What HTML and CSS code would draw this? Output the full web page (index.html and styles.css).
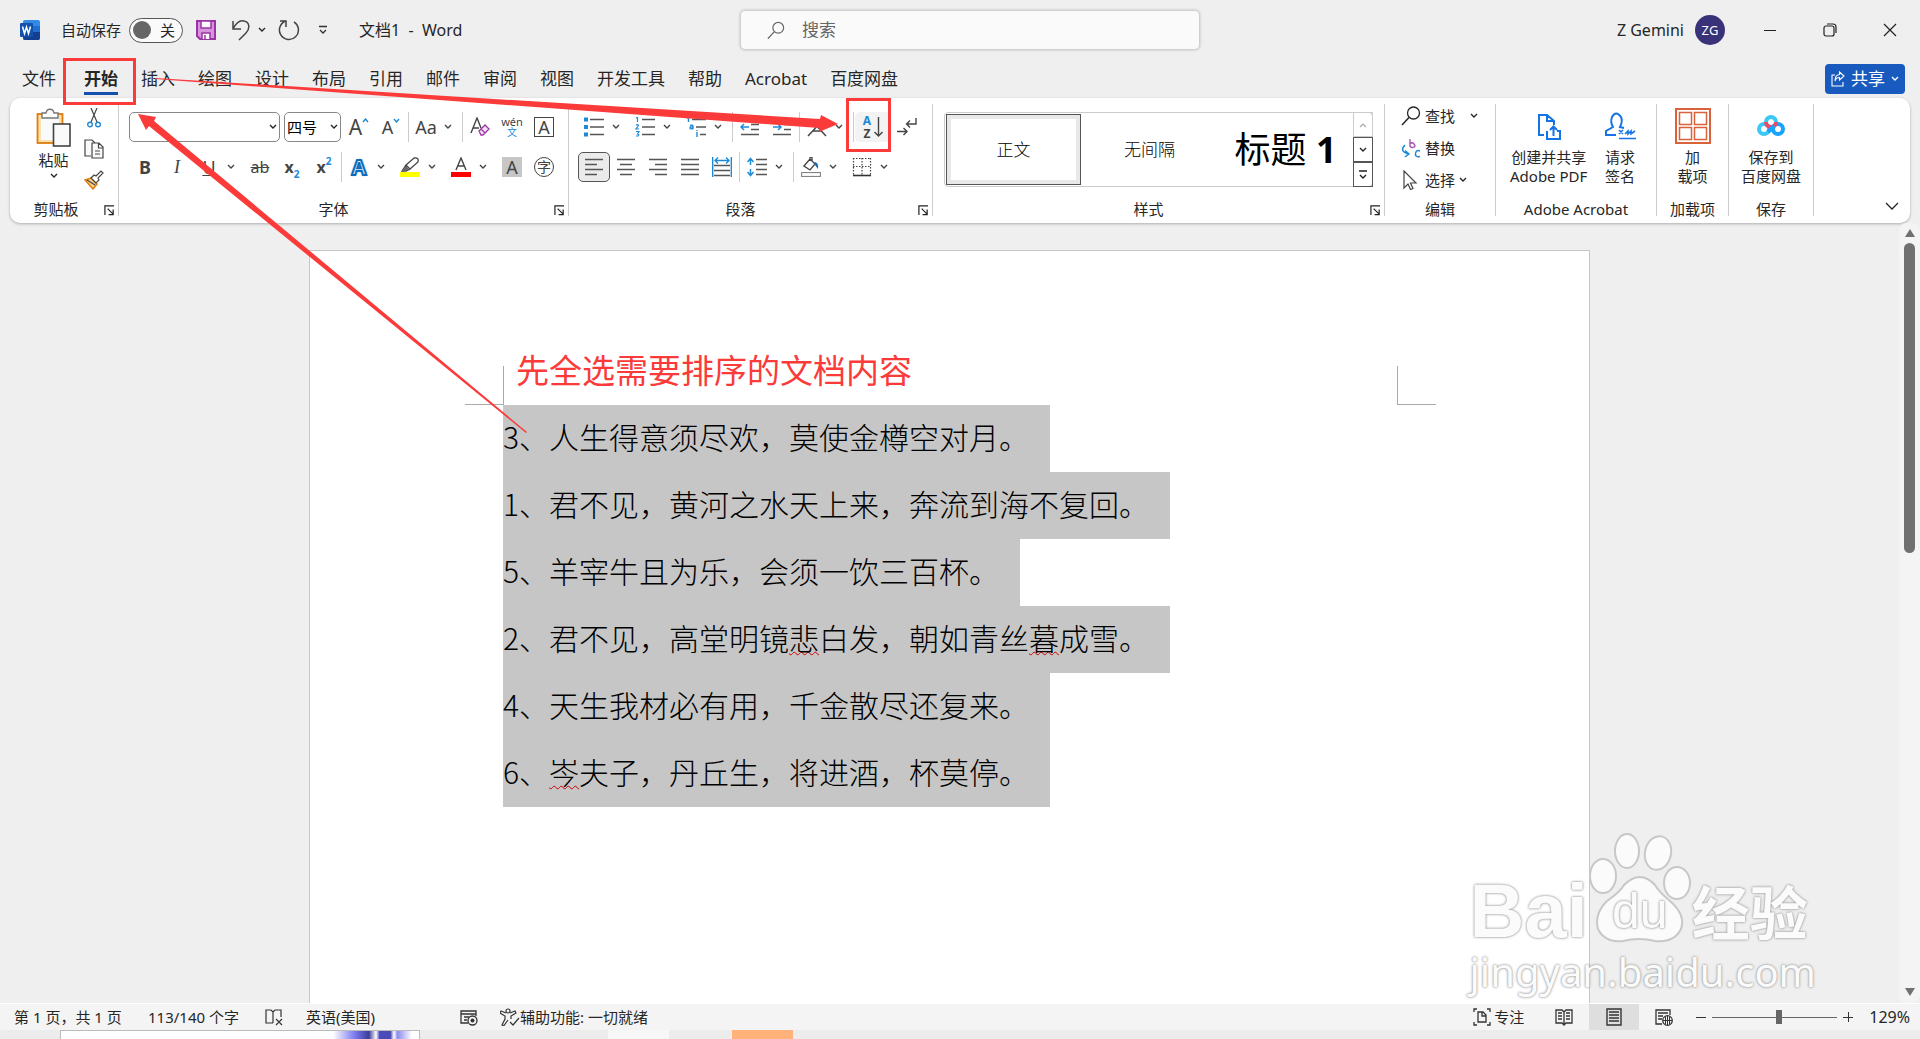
FILE: index.html
```
<!DOCTYPE html>
<html lang="zh-CN">
<head>
  <meta charset="UTF-8">
  <title>文档1 - Word</title>
  <link rel="stylesheet" href="styles.css">
</head>
<body>

  <svg class="defs" aria-hidden="true">
    <symbol id="chev" viewBox="0 0 8 6"><path d="M1 1l3 3 3-3" fill="none" stroke="currentColor" stroke-width="1.4"/></symbol>
    <symbol id="launch" viewBox="0 0 12 12"><path d="M1 11V1h10M4 4l6 6M10 5v5.500H5" fill="none" stroke="#222" stroke-width="1.300"/></symbol>
    <symbol id="lens" viewBox="0 0 20 20"><circle cx="12.500" cy="7" r="6" fill="none" stroke="currentColor" stroke-width="1.300"/><path d="M8 11.500L1 19" stroke="currentColor" stroke-width="1.500"/></symbol>
  </svg>

  <header class="titlebar">
    <div class="quick">
      <svg class="word-logo" width="20" height="20" viewBox="0 0 20 20">
        <rect x="3" width="17" height="20" rx="2" fill="#2f8be6"/>
        <path d="M3 10h17v8a2 2 0 0 1-2 2H5a2 2 0 0 1-2-2z" fill="#123f8f"/>
        <rect x="3" y="6" width="17" height="6" fill="#1f6fd0"/>
        <rect y="3" width="13" height="14" rx="1" fill="#1450ae"/>
        <path d="M2.500 6.500l2 7 2-6.500 2 6.500 2-7" fill="none" stroke="#fff" stroke-width="1.500"/>
      </svg>
      <label class="autosave">自动保存
        <span class="switch"><input type="checkbox"><span>关</span></span>
      </label>
      <button class="qbtn" title="保存">
        <svg width="20" height="20" viewBox="0 0 20 20"><path d="M1 1h18v18H4l-3-3z" fill="#d793dc" stroke="#9b34a5" stroke-width="2"/><path d="M5 1h10v7H5zM6 19v-6h8v6" fill="#fafafa" stroke="#9b34a5" stroke-width="1.500"/><path d="M9 15v4" stroke="#9b34a5" stroke-width="1.500"/></svg>
      </button>
      <button class="qbtn undo" title="撤消">
        <svg width="20" height="22" viewBox="0 0 20 22"><path d="M2 2v8h8M2 10C5 4 9 1 13 2c6 1 6 8 2 12l-7 7" fill="none" stroke="#444" stroke-width="1.500"/></svg>
        <svg width="8" height="6"><use href="#chev"/></svg>
      </button>
      <button class="qbtn" title="恢复">
        <svg width="22" height="22" viewBox="0 0 22 22"><path d="M2 2h6v6M8 2a9.500 9.500 0 1 0 8 1" fill="none" stroke="#444" stroke-width="1.500"/></svg>
      </button>
      <button class="qbtn" title="自定义快速访问工具栏">
        <svg width="10" height="10" viewBox="0 0 10 10"><path d="M1 1.500h8M2 5l3 3 3-3" fill="none" stroke="#333" stroke-width="1.300"/></svg>
      </button>
      <span class="doc-name">文档1&nbsp; -&nbsp; Word</span>
    </div>
    <label class="search">
      <svg width="18" height="19"><use href="#lens"/></svg>
      <input type="text" placeholder="搜索">
    </label>
    <div class="account">
      <span>Z Gemini</span>
      <span class="avatar">ZG</span>
      <button class="win" title="最小化"><svg width="14" height="14"><path d="M1 7.500h12" stroke="#222"/></svg></button>
      <button class="win" title="还原"><svg width="14" height="14" viewBox="0 0 14 14"><rect x="1" y="3" width="10" height="10" rx="2" fill="none" stroke="#222" stroke-width="1.200"/><path d="M4 1h6q3 0 3 3v6" fill="none" stroke="#222" stroke-width="1.200"/></svg></button>
      <button class="win" title="关闭"><svg width="14" height="14"><path d="M1 1l12 12M13 1L1 13" stroke="#222" stroke-width="1.200"/></svg></button>
    </div>
  </header>

  <nav class="tabs">
    <a href="#" class="file">文件</a>
    <a href="#" class="active">开始</a>
    <a href="#">插入</a>
    <a href="#">绘图</a>
    <a href="#">设计</a>
    <a href="#">布局</a>
    <a href="#">引用</a>
    <a href="#">邮件</a>
    <a href="#">审阅</a>
    <a href="#">视图</a>
    <a href="#">开发工具</a>
    <a href="#">帮助</a>
    <a href="#">Acrobat</a>
    <a href="#">百度网盘</a>
    <button class="share">
      <svg width="14" height="16" viewBox="0 0 14 16"><path d="M4 4H1v11h11v-4M8.500 1L13 5l-4.500 4V6.500Q5 6.500 4 10q0-6 4.500-6.500z" fill="none" stroke="#fff" stroke-width="1.100"/></svg>
      共享
      <svg width="8" height="6"><use href="#chev"/></svg>
    </button>
  </nav>

  <section class="ribbon">
    <div class="group clipboard">
      <div class="body">
        <button class="paste">
          <svg width="35" height="39" viewBox="0 0 35 39">
            <rect x="1.500" y="6" width="25" height="29" fill="#fbe2ad" stroke="#e07c10" stroke-width="1.800"/>
            <rect x="5" y="9" width="18" height="23" fill="#fafafa"/>
            <path d="M6 10V5h4c1-5 7-5 8 0h4v5z" fill="#fff" stroke="#777" stroke-width="1.400"/>
            <rect x="17.500" y="16" width="16.500" height="22" fill="#fafafa" stroke="#444" stroke-width="1.600"/>
          </svg>
          <span>粘贴</span>
          <svg width="8" height="6"><use href="#chev"/></svg>
        </button>
        <div class="stack">
          <button title="剪切"><svg width="14" height="20" viewBox="0 0 14 20"><path d="M4 0l6 14M10 0L4 14" stroke="#444" stroke-width="1.200"/><circle cx="3" cy="16.500" r="2.300" fill="none" stroke="#1e8ad6" stroke-width="1.400"/><circle cx="11" cy="16.500" r="2.300" fill="none" stroke="#1e8ad6" stroke-width="1.400"/></svg></button>
          <button title="复制"><svg width="20" height="20" viewBox="0 0 20 20"><path d="M7 17H1V1h7l3 3" fill="#fafafa" stroke="#444" stroke-width="1.200"/><path d="M8 4h7l4 4v11H8zM14.500 4v5H19M11 12h5M11 15h5" fill="#fafafa" stroke="#444" stroke-width="1.200"/></svg></button>
          <button title="格式刷"><svg width="20" height="20" viewBox="0 0 20 20"><path d="M1 10l6-2 6 6-4 5z" fill="#fbd28a" stroke="#e07c10" stroke-width="1.500"/><path d="M3 10l8 5M7 8l3-3 2 1 5-5 2 2-5 5 1 2-3 3z" fill="#fff" stroke="#444" stroke-width="1.200"/></svg></button>
        </div>
      </div>
      <div class="foot"><span>剪贴板</span><button title="剪贴板设置"><svg width="11" height="11"><use href="#launch"/></svg></button></div>
    </div>

    <div class="group font">
      <div class="body rows">
        <div class="row">
          <div class="combo name"><select aria-label="字体"><option></option></select><svg width="8" height="6"><use href="#chev"/></svg></div>
          <div class="combo size"><select aria-label="字号"><option>四号</option></select><svg width="8" height="6"><use href="#chev"/></svg></div>
          <button class="ib grow">A<svg width="7" height="5" viewBox="0 0 7 5"><path d="M1 4l2.500-3L6 4" fill="none" stroke="#1e8ad6" stroke-width="1.400"/></svg></button>
          <button class="ib shrink">A<svg width="7" height="5" viewBox="0 0 7 5"><path d="M1 1l2.500 3L6 1" fill="none" stroke="#1e8ad6" stroke-width="1.400"/></svg></button>
          <i class="sep"></i>
          <button class="ib split case"><b>Aa</b><svg width="8" height="6"><use href="#chev"/></svg></button>
          <i class="sep"></i>
          <button class="ib" title="清除格式"><svg width="20" height="20" viewBox="0 0 20 20"><path d="M1 16L7 1l4 10M3 11h6" fill="none" stroke="#444" stroke-width="1.400"/><path d="M9 14l6-6 4 4-6 6h-2zM11 12l4 4" fill="#f5e3f7" stroke="#9b34a5" stroke-width="1.300"/></svg></button>
          <button class="ib pinyin"><span>wén</span><span>文</span></button>
          <button class="ib"><span class="boxed">A</span></button>
        </div>
        <div class="row">
          <button class="ib bold">B</button>
          <button class="ib ital">I</button>
          <button class="ib split"><b class="under">U</b><svg width="8" height="6"><use href="#chev"/></svg></button>
          <button class="ib strike">ab</button>
          <button class="ib script">x<sub>2</sub></button>
          <button class="ib script">x<sup>2</sup></button>
          <i class="sep"></i>
          <button class="ib split"><b class="effect">A</b><svg width="8" height="6"><use href="#chev"/></svg></button>
          <button class="ib split"><b><svg width="20" height="20" viewBox="0 0 20 20"><path d="M2 14l4-6 4 4-4 2zM6 8l8-7q5-1 4 4l-8 7" fill="none" stroke="#444" stroke-width="1.300"/><path d="M2 14l4-5 3 3-3 2z" fill="#666"/><rect y="15" width="20" height="5" fill="#ff0"/></svg></b><svg width="8" height="6"><use href="#chev"/></svg></button>
          <button class="ib split"><b><svg width="20" height="20" viewBox="0 0 20 20"><path d="M5 13L10 1l5 12M7 9h6" fill="none" stroke="#444" stroke-width="1.400"/><rect y="15" width="20" height="5" fill="#f00"/></svg></b><svg width="8" height="6"><use href="#chev"/></svg></button>
          <button class="ib"><span class="shaded">A</span></button>
          <button class="ib"><span class="ringed">字</span></button>
        </div>
      </div>
      <div class="foot"><span>字体</span><button title="字体设置"><svg width="11" height="11"><use href="#launch"/></svg></button></div>
    </div>

    <div class="group para">
      <div class="body rows">
        <div class="row">
          <button class="ib split" title="项目符号"><b><svg width="20" height="20" viewBox="0 0 20 20"><path d="M0 2.500h4M0 10h4M0 17.500h4" stroke="#1e8ad6" stroke-width="4"/><path d="M6 2.500h14M6 10h14M6 17.500h14" stroke="#555" stroke-width="1.500"/></svg></b><svg width="8" height="6"><use href="#chev"/></svg></button>
          <button class="ib split" title="编号"><b><svg width="20" height="20" viewBox="0 0 20 20"><path d="M1 1l1.500-.5V5M1 8q2-1 2.500.5L1 12h3M1 14.500h3L2.500 17Q5 17.500 3 19H1" fill="none" stroke="#1e8ad6" stroke-width="1.200"/><path d="M7 2.500h13M7 10h13M7 17.500h13" stroke="#555" stroke-width="1.500"/></svg></b><svg width="8" height="6"><use href="#chev"/></svg></button>
          <button class="ib split" title="多级列表"><b><svg width="20" height="20" viewBox="0 0 20 20"><path d="M1 1l1.500-.5V5M4 8.500q3-1 3 1v2.500M7 10q-3-.5-3 1t3 .5M11 15v5M11 13v1" fill="none" stroke="#1e8ad6" stroke-width="1.400"/><path d="M6 2.500h14M10 10h10M14 17.500h6" stroke="#555" stroke-width="1.500"/></svg></b><svg width="8" height="6"><use href="#chev"/></svg></button>
          <i class="sep"></i>
          <button class="ib" title="减少缩进量"><svg width="20" height="20" viewBox="0 0 20 20"><path d="M1 2.500h18M11 7.500h8M11 12.500h8M1 17.500h18" stroke="#555" stroke-width="1.500"/><path d="M9 10H1M4 7l-3 3 3 3" fill="none" stroke="#1e8ad6" stroke-width="1.500"/></svg></button>
          <button class="ib" title="增加缩进量"><svg width="20" height="20" viewBox="0 0 20 20"><path d="M1 2.500h18M12 7.500h7M12 12.500h7M1 17.500h18" stroke="#555" stroke-width="1.500"/><path d="M1 10h8M6 7l3 3-3 3" fill="none" stroke="#1e8ad6" stroke-width="1.500"/></svg></button>
          <i class="sep"></i>
          <button class="ib split" title="中文版式"><b><svg width="20" height="20" viewBox="0 0 20 20"><path d="M1 19L16 3M19 19L4 3M6 14h8" fill="none" stroke="#444" stroke-width="1.500"/></svg></b><svg width="8" height="6"><use href="#chev"/></svg></button>
          <i class="sep"></i>
          <button class="ib sort" title="排序"><span class="az"><i>A</i><i>Z</i></span><svg width="9" height="20" viewBox="0 0 9 20"><path d="M4.500 0v19M.5 15l4 4 4-4" fill="none" stroke="#444" stroke-width="1.400"/></svg></button>
          <button class="ib" title="显示编辑标记"><svg width="20" height="20" viewBox="0 0 20 20"><path d="M19 1v6h-9M13 3.500L9.500 7l3.500 3.500M0 14.500h10M6.500 11l3.500 3.500L6.500 18" fill="none" stroke="#444" stroke-width="1.400"/></svg></button>
        </div>
        <div class="row">
          <button class="ib pressed" title="左对齐"><svg width="18" height="18" viewBox="0 0 18 18"><path d="M0 1.500h18M0 6.500h12M0 11.500h18M0 16.500h12" stroke="#555" stroke-width="1.500"/></svg></button>
          <button class="ib" title="居中"><svg width="18" height="18" viewBox="0 0 18 18"><path d="M0 1.500h18M3 6.500h12M0 11.500h18M3 16.500h12" stroke="#555" stroke-width="1.500"/></svg></button>
          <button class="ib" title="右对齐"><svg width="18" height="18" viewBox="0 0 18 18"><path d="M0 1.500h18M6 6.500h12M0 11.500h18M6 16.500h12" stroke="#555" stroke-width="1.500"/></svg></button>
          <button class="ib" title="两端对齐"><svg width="18" height="18" viewBox="0 0 18 18"><path d="M0 1.500h18M0 6.500h18M0 11.500h18M0 16.500h18" stroke="#555" stroke-width="1.500"/></svg></button>
          <button class="ib" title="分散对齐"><svg width="20" height="20" viewBox="0 0 20 20"><path d="M.7 0v20M19.300 0v20M3 3.500h14M6 .5l-3 3 3 3M14 .5l3 3-3 3" fill="none" stroke="#1e8ad6" stroke-width="1.400"/><path d="M2 8.500h16M2 13.500h16M2 18.500h16" stroke="#555" stroke-width="1.500"/></svg></button>
          <i class="sep"></i>
          <button class="ib split" title="行和段落间距"><b><svg width="20" height="20" viewBox="0 0 20 20"><path d="M3.500 2v6M3.500 12v6M.5 5l3-3.500 3 3.500M.5 15l3 3.500 3-3.500" fill="none" stroke="#1e8ad6" stroke-width="1.500"/><path d="M9 2.500h11M9 7.500h11M9 12.500h11M9 17.500h11" stroke="#555" stroke-width="1.500"/></svg></b><svg width="8" height="6"><use href="#chev"/></svg></button>
          <i class="sep"></i>
          <button class="ib split" title="底纹"><b><svg width="20" height="20" viewBox="0 0 20 20"><path d="M3 9l6-7 5 5-5 6zM9 2V0h2v4" fill="none" stroke="#444" stroke-width="1.300"/><path d="M13 5q5 0 4 7l-3-4z" fill="#0f6cbd"/><rect x=".6" y="15.600" width="18.800" height="3.800" fill="#fff" stroke="#777"/></svg></b><svg width="8" height="6"><use href="#chev"/></svg></button>
          <button class="ib split" title="边框"><b><svg width="20" height="20" viewBox="0 0 20 20"><path d="M1 1.500h18M1 9.500h18M1.500 1v17M10 1v17M18.500 1v17" stroke="#444" stroke-width="1.200" stroke-dasharray="1.500 1.500"/><path d="M1 18.500h18" stroke="#333" stroke-width="1.600"/></svg></b><svg width="8" height="6"><use href="#chev"/></svg></button>
        </div>
      </div>
      <div class="foot"><span>段落</span><button title="段落设置"><svg width="11" height="11"><use href="#launch"/></svg></button></div>
    </div>

    <div class="group styles">
      <div class="body">
        <div class="gallery">
          <button class="style on">正文</button>
          <button class="style">无间隔</button>
          <button class="style heading">标题 <strong>1</strong></button>
          <div class="updown">
            <button class="off" title="上一行"><svg width="8" height="6" viewBox="0 0 8 6"><path d="M1 5l3-3 3 3" fill="none" stroke="currentColor" stroke-width="1.200"/></svg></button>
            <button title="下一行"><svg width="8" height="6"><use href="#chev"/></svg></button>
            <button title="更多"><svg width="10" height="10" viewBox="0 0 10 10"><path d="M1 1h8M2 5l3 3 3-3" fill="none" stroke="#222" stroke-width="1.400"/></svg></button>
          </div>
        </div>
      </div>
      <div class="foot"><span>样式</span><button title="样式设置"><svg width="11" height="11"><use href="#launch"/></svg></button></div>
    </div>

    <div class="group edit">
      <div class="body">
        <button><svg width="20" height="20"><use href="#lens"/></svg>查找<svg class="far" width="8" height="6"><use href="#chev"/></svg></button>
        <button><svg width="20" height="20" viewBox="0 0 20 20"><path d="M9 1v8M9 6q2-2.500 4 0t0 3q-2 1.500-4-1" fill="none" stroke="#a64db0" stroke-width="1.300"/><path d="M4 7Q-2 13 7 16M4 12.500L8 16l-4 3M19 13q-4-1.500-4.500 2.500T19 18.500" fill="none" stroke="#1e8ad6" stroke-width="1.500"/></svg>替换</button>
        <button><svg width="20" height="20" viewBox="0 0 20 20"><path d="M3 1v17l4-4 2.500 5.500 2.500-1-2.500-5.500H15z" fill="#fff" stroke="#444" stroke-width="1.200"/></svg>选择<svg width="8" height="6"><use href="#chev"/></svg></button>
      </div>
      <div class="foot"><span>编辑</span></div>
    </div>

    <div class="group acrobat">
      <div class="body">
        <button class="big"><svg width="36" height="36" viewBox="0 0 36 36"><path d="M13 27H8V7h8l7 6v4M16 7v6h6M16 23v8h13v-8h-3M22.500 28v-9M19 22l3.500-3.500L26 22" fill="none" stroke="#1473e6" stroke-width="2"/></svg><span>创建并共享<br>Adobe PDF</span></button>
        <button class="big"><svg width="36" height="36" viewBox="0 0 36 36"><path d="M14 27H4v-4l7-4q-3-5-1-10 4-7 9 0 2 4-1 10l4 1" fill="none" stroke="#1473e6" stroke-width="2"/><path d="M17 22l4 4M21 22l-4 4M23 26l3-3v3l3-3v3l4-3M17 30.500h17" fill="none" stroke="#1473e6" stroke-width="1.600"/></svg><span>请求<br>签名</span></button>
      </div>
      <div class="foot"><span>Adobe Acrobat</span></div>
    </div>

    <div class="group addins">
      <div class="body">
        <button class="big"><svg width="36" height="36" viewBox="0 0 36 36"><g fill="none" stroke="#d9623b" stroke-width="1.500"><rect x="1" y="1" width="34" height="34" stroke-width="2"/><rect x="4.500" y="4.500" width="12" height="12"/><rect x="19.500" y="4.500" width="12" height="12"/><rect x="4.500" y="19.500" width="12" height="12"/><rect x="19.500" y="19.500" width="12" height="12"/></g></svg><span>加<br>载项</span></button>
      </div>
      <div class="foot"><span>加载项</span></div>
    </div>

    <div class="group pan">
      <div class="body">
        <button class="big"><svg width="36" height="36" viewBox="0 0 36 36"><g fill="none" stroke-width="4"><circle cx="11" cy="21" r="5" stroke="#3cc8f5"/><circle cx="25" cy="21" r="5" stroke="#18a4fb"/><path d="M13 14a5 5 0 1 1 10 0" stroke="#3cc8f5"/><path d="M13 14a5 5 0 0 0 10 0" stroke="#f0486a"/><path d="M15 24l6-6" stroke="#18a4fb"/></g></svg><span>保存到<br>百度网盘</span></button>
      </div>
      <div class="foot"><span>保存</span></div>
    </div>

    <button class="collapse" title="折叠功能区"><svg width="14" height="9" viewBox="0 0 14 9"><path d="M1 1l6 6 6-6" fill="none" stroke="#222" stroke-width="1.300"/></svg></button>
  </section>

  <main class="work">
    <div class="canvas">
      <article class="page">
        <div class="margins"></div>
        <p class="caption">先全选需要排序的文档内容</p>
        <p><span>3、人生得意须尽欢，莫使金樽空对月。</span></p>
        <p><span>1、君不见，黄河之水天上来，奔流到海不复回。</span></p>
        <p><span>5、羊宰牛且为乐，会须一饮三百杯。</span></p>
        <p><span>2、君不见，高堂明镜<u>悲</u>白发，朝如青丝<u>暮</u>成雪。</span></p>
        <p><span>4、天生我材必有用，千金散尽还复来。</span></p>
        <p><span>6、<u>岑</u>夫子，丹丘生，将进酒，杯莫停。</span></p>
      </article>
    </div>
    <div class="scroll">
      <svg width="12" height="10"><path d="M6 1l5 8H1z" fill="#707070"/></svg>
      <div class="track"><div class="thumb"></div></div>
      <svg width="12" height="10"><path d="M6 9L1 1h10z" fill="#707070"/></svg>
    </div>

    <div class="watermark">
      <div class="brand">
        <span class="bai">Bai</span>
        <span class="paw">
          <svg width="104" height="114" viewBox="0 0 104 114">
            <g fill="#fbfbfb" stroke="#c8c8c8" stroke-width="2">
              <ellipse cx="15" cy="45" rx="13" ry="17"/>
              <ellipse cx="39" cy="20" rx="12" ry="17"/>
              <ellipse cx="70" cy="22" rx="13" ry="17" transform="rotate(12 70 22)"/>
              <ellipse cx="89" cy="52" rx="13" ry="16"/>
              <path d="M36 54q16-16 31 0 4 7 15 16 16 14 11 28-7 14-26 12-16-4-32 0-18 2-25-12-4-15 9-28 13-9 17-16z"/>
            </g>
          </svg>
          <span>du</span>
        </span>
        <span class="jing">经验</span>
      </div>
      <div class="url">jingyan.baidu.com</div>
    </div>
  </main>

  <footer class="status">
    <span class="pages">第 1 页，共 1 页</span>
    <span class="words">113/140 个字</span>
    <button class="proof" title="校对"><svg width="18" height="18" viewBox="0 0 18 18"><path d="M8 15H1V2h5l2 2 2-2h6v7M8 4v11M11 11l6 6M17 11l-6 6" fill="none" stroke="#333" stroke-width="1.200"/></svg></button>
    <span class="lang">英语(美国)</span>
    <button class="macro" title="宏"><svg width="18" height="17" viewBox="0 0 18 17"><path d="M8 14H1V2h15v5M1 5h15M4 8h5M4 11h3" fill="none" stroke="#333" stroke-width="1.300"/><circle cx="12.500" cy="11.500" r="4.500" fill="#f4f4f4" stroke="#333" stroke-width="1.300"/><circle cx="12.500" cy="11.500" r="2" fill="#333"/></svg></button>
    <button class="access"><svg width="20" height="18" viewBox="0 0 20 18"><circle cx="8" cy="3" r="2" fill="none" stroke="#333" stroke-width="1.200"/><path d="M6 5L1 3 0 5l5 3v3l-3 6 2 .5L8 12M10 5l5-2 1 2-5 3v3M10 14l3 3 6-7" fill="none" stroke="#333" stroke-width="1.200"/></svg>辅助功能: 一切就绪</button>
    <button class="focus"><svg width="18" height="18" viewBox="0 0 18 18"><path d="M4 1H1v3M14 1h3v3M4 17H1v-3M14 17h3v-3M5 4h5l3 3v7H5zM9 4v4h4" fill="none" stroke="#333" stroke-width="1.300"/></svg>专注</button>
    <button class="view" title="阅读视图"><svg width="18" height="17" viewBox="0 0 18 17"><path d="M9 3v13M9 3L7 1H1v13h6l2 2 2-2h6V1h-6zM3 4h4M3 7h4M3 10h4M11 4h4M11 7h4M11 10h4" fill="none" stroke="#333" stroke-width="1.300"/></svg></button>
    <button class="view current" title="页面视图"><svg width="16" height="18" viewBox="0 0 16 18"><path d="M1 1h14v16H1zM3 4h10M3 7h10M3 10h10M3 13h10" fill="none" stroke="#333" stroke-width="1.400"/></svg></button>
    <button class="view" title="Web 版式视图"><svg width="18" height="17" viewBox="0 0 18 17"><path d="M7 15H1V1h14v5M3 4h10M3 7h5M3 10h4" fill="none" stroke="#333" stroke-width="1.300"/><circle cx="12.500" cy="11.500" r="4.800" fill="#f4f4f4" stroke="#333" stroke-width="1.200"/><path d="M8 11.500h9M12.500 7v9M10.500 7.500v8M14.500 7.500v8" stroke="#333"/></svg></button>
    <div class="zoom">
      <button title="缩小"><svg width="10" height="10"><path d="M0 5.500h10" stroke="#333"/></svg></button>
      <input type="range" min="0" max="100" value="54" aria-label="缩放">
      <button title="放大"><svg width="10" height="10"><path d="M0 5.500h10M5.500 0v10" stroke="#333"/></svg></button>
    </div>
    <span class="percent">129%</span>
  </footer>

  <div class="taskbar">
    <div class="preview"></div>
    <div class="tile"></div>
    <div class="tile orange"></div>
    <span class="clock">16:21</span>
  </div>

  <svg class="marks" aria-hidden="true">
    <g fill="none" stroke="#fb3a3a" stroke-width="3">
      <rect x="64.500" y="59.500" width="70" height="44"/>
      <rect x="847.500" y="99.500" width="42" height="51"/>
    </g>
    <g fill="#fb3a3a">
      <path d="M155 78L820 119 821 115 838 124 819 132 819 128 155 79z"/>
      <path d="M138 114L156 117 154 121 527 432 526 433 149 126 146 130z"/>
    </g>
  </svg>

</body>
</html>
```
FILE: styles.css
```
* {
  box-sizing: border-box;
}

body {
  margin: 0;
  height: 100vh;
  display: flex;
  flex-direction: column;
  position: relative;
  overflow: hidden;
  background: #efefef;
  color: #262626;
  font-family: "Noto Sans", "Noto Sans CJK SC", sans-serif;
  font-size: 15px;
  line-height: 20px;
}

button, input, select {
  font: inherit;
  color: inherit;
  border: 0;
  padding: 0;
  margin: 0;
  background: none;
}

a {
  color: inherit;
  text-decoration: none;
}

svg {
  display: block;
  flex: none;
}

.defs {
  position: absolute;
  width: 0;
  height: 0;
}

/* title bar */

.titlebar {
  display: grid;
  grid-template-columns: 1fr 460px 1fr;
  align-items: center;
  height: 60px;
  padding-left: 20px;
  flex: none;
}

.quick {
  display: flex;
  align-items: center;
}

.autosave {
  display: flex;
  align-items: center;
  gap: 8px;
  margin: 0 13px 0 21px;
}

.switch {
  display: flex;
  align-items: center;
  justify-content: space-between;
  width: 54px;
  height: 25px;
  padding: 0 7px 0 3px;
  border: 1px solid #555;
  border-radius: 13px;
  background: #fafafa;
}

.switch input {
  appearance: none;
  width: 18px;
  height: 18px;
  border-radius: 50%;
  background: #666;
}

.qbtn {
  display: flex;
  align-items: center;
  gap: 8px;
  margin-right: 18px;
}

.qbtn:first-of-type {
  margin-right: 15px;
}

.undo {
  gap: 7px;
  margin-right: 12px;
}

.doc-name {
  margin-left: 13px;
  font-size: 16px;
  white-space: nowrap;
}

.search {
  display: flex;
  align-items: center;
  gap: 17px;
  height: 40px;
  padding: 0 26px;
  border: 1px solid #d0d0d0;
  border-radius: 5px;
  background: #fafafa;
  box-shadow: 0 0 3px rgba(0, 0, 0, .2);
  color: #666;
  font-size: 17px;
}

.search input {
  flex: 1;
}

.search input::placeholder {
  color: #666;
}

.account {
  display: flex;
  align-items: center;
  justify-content: flex-end;
  font-size: 16px;
}

.avatar {
  width: 30px;
  height: 30px;
  margin: 0 15px 0 11px;
  border-radius: 50%;
  background: #393278;
  color: #fff;
  font-size: 13px;
  line-height: 30px;
  text-align: center;
}

.win {
  display: flex;
  justify-content: center;
  width: 60px;
}

/* tabs */

.tabs {
  display: flex;
  gap: 23px;
  height: 38px;
  padding: 0 15px 0 22px;
  font-size: 17px;
  flex: none;
}

.tabs a {
  height: 35px;
  padding-top: 9px;
}

.tabs .file {
  margin-right: 5px;
}

.tabs .active {
  font-weight: bold;
  border-bottom: 3px solid #1450ae;
}

.share {
  display: flex;
  align-items: center;
  justify-content: center;
  gap: 6px;
  width: 80px;
  height: 30px;
  margin: 4px 0 0 auto;
  border-radius: 4px;
  background: #185abd;
  color: #fff;
}

/* ribbon */

.ribbon {
  display: flex;
  height: 125px;
  margin: 0 10px;
  padding: 6px 0 7px;
  border-radius: 10px;
  background: #fff;
  box-shadow: 0 1px 3px rgba(0, 0, 0, .28);
  flex: none;
}

.group {
  display: flex;
  flex-direction: column;
  border-right: 1px solid #ccc;
}

.body {
  display: flex;
  flex: 1;
}

.foot {
  position: relative;
  height: 18px;
  text-align: center;
  line-height: 19px;
  margin-bottom: -2px;
}

.foot button {
  position: absolute;
  right: 3px;
  bottom: 2px;
}

.clipboard { width: 109px; }
.font      { width: 450px; }
.para      { width: 364px; }
.styles    { width: 452px; }
.edit      { width: 111px; }
.acrobat   { width: 161px; }
.addins    { width: 72px; }
.pan       { width: 85px; }

.font .foot,
.para .foot,
.styles .foot {
  padding-right: 20px;
}

.clipboard .body {
  padding: 4px 14px 0 26px;
  justify-content: space-between;
}

.clipboard .foot {
  padding-right: 16px;
}

.paste {
  display: flex;
  flex-direction: column;
  align-items: center;
  align-self: flex-start;
  gap: 3px;
}

.stack {
  display: flex;
  flex-direction: column;
  gap: 11px;
}

.stack button {
  display: flex;
  justify-content: center;
  width: 20px;
}

.rows {
  flex-direction: column;
  gap: 10px;
  padding: 8px 0 0 9px;
}

.font .rows {
  padding-left: 10px;
}

.row {
  display: flex;
  height: 30px;
}

.combo {
  position: relative;
  margin-right: 4px;
}

.combo select {
  appearance: none;
  width: 100%;
  height: 30px;
  padding-left: 2px;
  border: 1px solid #888;
  border-radius: 5px;
  color: #000;
}

.combo svg {
  position: absolute;
  right: 3px;
  top: 12px;
}

.name { width: 151px; }

.size {
  width: 57px;
  margin-right: 2px;
}

.sep {
  width: 1px;
  margin: 0 1px;
  background: #ccc;
}

.ib {
  display: flex;
  align-items: center;
  justify-content: center;
  width: 32px;
  height: 30px;
  border-radius: 5px;
  font-size: 18px;
  color: #444;
}

.split {
  width: 51px;
  justify-content: flex-start;
}

.split b {
  display: flex;
  justify-content: center;
  width: 32px;
  margin-right: 2px;
  font-weight: normal;
}

.grow svg,
.shrink svg {
  align-self: flex-start;
  margin-top: 6px;
}

.grow   { font-size: 21px; }
.shrink { font-size: 18px; }

.pinyin {
  flex-direction: column;
  font-size: 11px;
  line-height: 11px;
}

.pinyin span:last-child {
  font-size: 10px;
  color: #1e8ad6;
}

.boxed,
.shaded,
.ringed {
  width: 20px;
  height: 20px;
  line-height: 18px;
  border: 1px solid #444;
}

.shaded {
  background: #c6c6c6;
  border-color: #c6c6c6;
}

.ringed {
  border-radius: 50%;
  font-size: 14px;
}

.bold { font-weight: bold; }

.ital {
  font-family: "Liberation Serif", serif;
  font-style: italic;
}

.under { text-decoration: underline; }

.strike {
  font-size: 16px;
  text-decoration: line-through;
}

.script {
  font-weight: bold;
  font-size: 16px;
}

.script sub,
.script sup {
  font-size: 10px;
  line-height: 12px;
  color: #1e8ad6;
}

.script sub {
  align-self: flex-end;
  padding-bottom: 2px;
}

.script sup {
  align-self: flex-start;
  padding-top: 3px;
}

.split .effect {
  color: #e8f3fc;
  font-size: 21px;
  font-weight: bold;
  -webkit-text-stroke: 2px #0f6cbd;
  text-shadow: 0 0 2px #3a9be5, 0 0 2px #3a9be5;
}

.sort {
  width: 36px;
  gap: 3px;
  background: #f3f3f3;
}

.az i {
  display: block;
  font-size: 12px;
  font-style: normal;
  font-weight: bold;
  line-height: 13px;
}

.az i:first-child {
  color: #1e8ad6;
}

.pressed {
  border: 1px solid #555;
  background: #ebebeb;
}

.styles .body {
  padding: 8px 12px 0 11px;
}

.gallery {
  display: flex;
  flex: 1;
  height: 75px;
  border: 1px solid #ccc;
  border-radius: 4px;
}

.style {
  width: 135px;
  margin: 1px 0 1px 1px;
  font-size: 17px;
  font-weight: 300;
  color: #000;
  white-space: nowrap;
}

.on {
  border: 1px solid #555;
  box-shadow: inset 0 0 0 4px #e8e8e8;
}

.heading {
  font-size: 36px;
  font-weight: normal;
}

.updown {
  display: flex;
  flex-direction: column;
  width: 20px;
  margin: -1px -1px -1px auto;
}

.updown button {
  display: flex;
  align-items: center;
  justify-content: center;
  flex: 1;
  border: 1px solid #555;
}

.updown .off {
  border-color: #ccc;
  color: #aaa;
}

.edit .body {
  flex-direction: column;
  gap: 12px;
  padding: 2px 0 0 16px;
}

.edit .body button {
  display: flex;
  align-items: center;
  gap: 4px;
  height: 20px;
}

.edit .far {
  margin-left: 11px;
}

.acrobat .body {
  justify-content: space-between;
  padding: 0 18px 0 14px;
}

.addins .body,
.pan .body {
  justify-content: center;
}

.big {
  display: flex;
  flex-direction: column;
  align-items: center;
  gap: 4px;
  align-self: flex-start;
  padding-top: 4px;
  line-height: 19px;
  white-space: nowrap;
}

.collapse {
  align-self: flex-end;
  margin: 0 11px 5px auto;
}

/* document */

.work {
  display: flex;
  flex: 1;
  min-height: 0;
  position: relative;
}

.canvas {
  flex: 1;
  overflow: hidden;
  padding-top: 27px;
}

.page {
  position: relative;
  width: 1281px;
  height: 1600px;
  margin: 0 auto;
  border: 1px solid #c6c6c6;
  background: #fff;
}

.margins {
  display: flex;
  justify-content: space-between;
  align-items: flex-end;
  height: 154px;
  padding: 0 153px 0 155px;
}

.margins::before,
.margins::after {
  content: "";
  width: 38px;
  height: 38px;
  border-bottom: 1px solid #aaa;
}

.margins::before { border-right: 1px solid #aaa; }
.margins::after  { border-left: 1px solid #aaa; }

.page p {
  margin: 0 0 0 193px;
  font-family: "Noto Sans CJK SC", sans-serif;
  font-size: 30px;
  font-weight: 300;
  line-height: 63px;
  color: #000;
}

.page p span {
  display: block;
  width: fit-content;
  padding: 0 21px 4px 0;
  background: #c6c6c6;
}

.page u {
  text-decoration: underline wavy #d00000 1px;
}

.page .caption {
  position: absolute;
  left: 13px;
  top: 98px;
  font-size: 33px;
  font-weight: normal;
  line-height: 40px;
  color: #fb3a3a;
}

.scroll {
  display: flex;
  flex-direction: column;
  align-items: center;
  width: 21px;
  padding: 5px 0 6px;
  border-radius: 8px;
  background: #f4f4f4;
}

.track {
  flex: 1;
  padding: 5px 0;
}

.thumb {
  width: 11px;
  height: 42%;
  border-radius: 6px;
  background: #707070;
}

.watermark {
  position: absolute;
  right: 104px;
  bottom: 4px;
  color: #fbfbfb;
  text-shadow: 0 0 2px #999, 0 0 3px #aaa;
}

.brand {
  display: flex;
  align-items: flex-end;
  height: 112px;
  font-weight: bold;
}

.bai {
  font-family: "Liberation Sans", sans-serif;
  font-size: 76px;
  line-height: 68px;
}

.paw {
  position: relative;
}

.paw span {
  position: absolute;
  left: 0;
  right: 0;
  bottom: 14px;
  font-family: "Liberation Sans", sans-serif;
  font-size: 50px;
  font-weight: normal;
  line-height: 40px;
  text-align: center;
}

.jing {
  font-size: 58px;
  line-height: 64px;
}

.url {
  font-size: 40px;
  line-height: 54px;
}

/* status bar */

.status {
  display: flex;
  align-items: center;
  height: 27px;
  padding-right: 10px;
  border-top: 1px solid #fff;
  background: #f4f4f4;
  white-space: nowrap;
  flex: none;
}

.status button {
  display: flex;
  align-items: center;
  justify-content: center;
}

.pages  { width: 134px; margin-left: 14px; }
.words  { width: 117px; }
.proof  { margin-right: 23px; }
.lang   { width: 154px; }
.macro  { margin-right: 22px; }

.focus {
  gap: 3px;
  margin: 0 15px 0 auto;
}

.view {
  width: 50px;
  height: 26px;
}

.current {
  background: #dedede;
}

.zoom {
  display: flex;
  align-items: center;
  gap: 6px;
  margin: 0 16px 0 7px;
}

.zoom input {
  appearance: none;
  width: 125px;
  height: 14px;
  background: linear-gradient(#666, #666) center / 100% 1px no-repeat;
}

.zoom input::-webkit-slider-thumb {
  appearance: none;
  width: 6px;
  height: 14px;
  background: #666;
}

.percent {
  font-size: 16px;
}

/* strip of the desktop taskbar under the window */

.taskbar {
  display: flex;
  height: 9px;
  padding-left: 60px;
  overflow: hidden;
  background: #ececec;
  flex: none;
}

.preview {
  width: 360px;
  margin-right: 188px;
  border: 1px solid #bbb;
  border-bottom: 0;
  background: linear-gradient(90deg, #fff 76%, #7c7cf0 82%, #3c3c98 86%, #fff 88%, #4a4ab8 89%, #4a4ab8 92%, #fff 93%, #8c8cf0 94%, #fff 98%);
}

.tile {
  width: 61px;
  margin-right: 63px;
  background: #f7f7f7;
}

.orange {
  background: #ffb27a;
}

.clock {
  margin: 3px 92px 0 auto;
  color: #000;
}

/* arrows and boxes drawn over the window */

.marks {
  position: absolute;
  left: 0;
  top: 0;
  width: 100%;
  height: 100%;
  pointer-events: none;
}
```
